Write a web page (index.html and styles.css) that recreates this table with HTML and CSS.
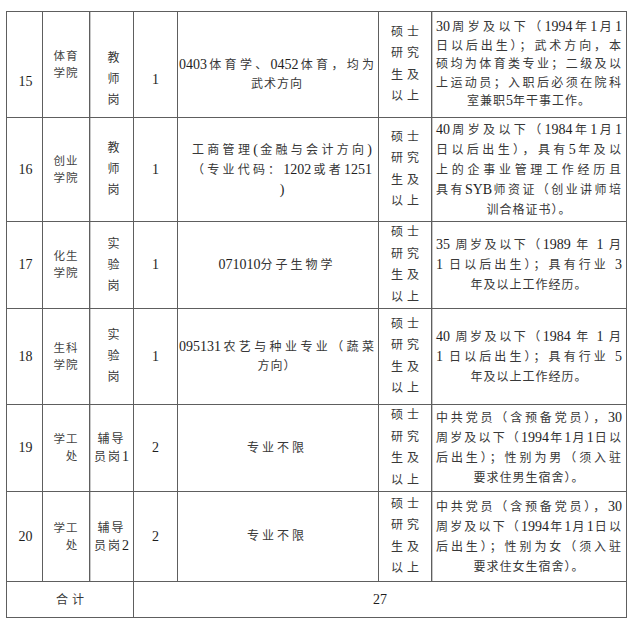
FILE: index.html
```html
<!DOCTYPE html>
<html lang="zh-CN">
<head>
<meta charset="utf-8">
<title>招聘岗位表</title>
<link rel="stylesheet" href="styles.css">
</head>
<body>
<div class="page">
<table class="jobs">
  <colgroup>
    <col class="w1"><col class="w2"><col class="w3"><col class="w4"><col class="w5"><col class="w6"><col class="w7">
  </colgroup>
  <tbody>
    <tr class="r15">
      <td class="n"><div class="low">15</div></td>
      <td class="dept"><div>体育</div><div>学院</div></td>
      <td class="post"><div class="low2"><div>教</div><div>师</div><div>岗</div></div></td>
      <td class="cnt"><div class="low2">1</div></td>
      <td class="major"><div class="low3"><div class="j"><span class="d">0403</span>体育学、<span class="d">0452</span>体育，均为</div><div class="c">武术方向</div></div></td>
      <td class="deg"><div>硕士</div><div>研究</div><div>生及</div><div>以上</div></td>
      <td class="req tight"><div class="j"><span class="d">30</span>周岁及以下（<span class="d">1994</span>年<span class="d">1</span>月<span class="d">1</span></div><div class="j">日以后出生）；武术方向，本</div><div class="j">硕均为体育类专业；二级及以</div><div class="j">上运动员；入职后必须在院科</div><div class="c">室兼职<span class="d">5</span>年干事工作。</div></td>
    </tr>
    <tr class="r16">
      <td class="n">16</td>
      <td class="dept"><div>创业</div><div>学院</div></td>
      <td class="post"><div>教</div><div>师</div><div>岗</div></td>
      <td class="cnt">1</td>
      <td class="major inset"><div class="j">工商管理<span class="d">(</span>金融与会计方向<span class="d">)</span></div><div class="j">（专业代码：<span class="d">1202</span>或者<span class="d">1251</span></div><div class="c"><span class="d">)</span></div></td>
      <td class="deg"><div>硕士</div><div>研究</div><div>生及</div><div>以上</div></td>
      <td class="req"><div class="j"><span class="d">40</span>周岁及以下（<span class="d">1984</span>年<span class="d">1</span>月<span class="d">1</span></div><div class="j">日以后出生），具有<span class="d">5</span>年及以</div><div class="j">上的企事业管理工作经历且</div><div class="j">具有<span class="d">SYB</span>师资证（创业讲师培</div><div class="c">训合格证书）。</div></td>
    </tr>
    <tr class="r17">
      <td class="n">17</td>
      <td class="dept"><div>化生</div><div>学院</div></td>
      <td class="post"><div>实</div><div>验</div><div>岗</div></td>
      <td class="cnt">1</td>
      <td class="major"><div class="c wide"><span class="d">071010</span>分子生物学</div></td>
      <td class="deg"><div>硕士</div><div>研究</div><div>生及</div><div>以上</div></td>
      <td class="req"><div class="j"><span class="d">35</span> 周岁及以下（<span class="d">1989</span> 年 <span class="d">1</span> 月</div><div class="j"><span class="d">1</span> 日以后出生）；具有行业 <span class="d">3</span></div><div class="c">年及以上工作经历。</div></td>
    </tr>
    <tr class="r18">
      <td class="n">18</td>
      <td class="dept"><div>生科</div><div>学院</div></td>
      <td class="post"><div>实</div><div>验</div><div>岗</div></td>
      <td class="cnt">1</td>
      <td class="major"><div class="j"><span class="d">095131</span>农艺与种业专业（蔬菜</div><div class="c">方向）</div></td>
      <td class="deg"><div>硕士</div><div>研究</div><div>生及</div><div>以上</div></td>
      <td class="req"><div class="j"><span class="d">40</span> 周岁及以下（<span class="d">1984</span> 年 <span class="d">1</span> 月</div><div class="j"><span class="d">1</span> 日以后出生）；具有行业 <span class="d">5</span></div><div class="c">年及以上工作经历。</div></td>
    </tr>
    <tr class="r19">
      <td class="n">19</td>
      <td class="dept"><div>学工</div><div class="ind">处</div></td>
      <td class="post two"><div>辅导</div><div>员岗<span class="d">1</span></div></td>
      <td class="cnt">2</td>
      <td class="major"><div class="c wide">专业不限</div></td>
      <td class="deg"><div>硕士</div><div>研究</div><div>生及</div><div>以上</div></td>
      <td class="req"><div class="j">中共党员（含预备党员），<span class="d">30</span></div><div class="j">周岁及以下（<span class="d">1994</span>年<span class="d">1</span>月<span class="d">1</span>日以</div><div class="j">后出生）；性别为男（须入驻</div><div class="c">要求住男生宿舍）。</div></td>
    </tr>
    <tr class="r20">
      <td class="n">20</td>
      <td class="dept"><div>学工</div><div class="ind">处</div></td>
      <td class="post two"><div>辅导</div><div>员岗<span class="d">2</span></div></td>
      <td class="cnt">2</td>
      <td class="major"><div class="c wide">专业不限</div></td>
      <td class="deg"><div>硕士</div><div>研究</div><div>生及</div><div>以上</div></td>
      <td class="req"><div class="j">中共党员（含预备党员），<span class="d">30</span></div><div class="j">周岁及以下（<span class="d">1994</span>年<span class="d">1</span>月<span class="d">1</span>日以</div><div class="j">后出生）；性别为女（须入驻</div><div class="c">要求住女生宿舍）。</div></td>
    </tr>
    <tr class="total">
      <td colspan="3" class="sum">合计</td>
      <td colspan="4" class="sumv">27</td>
    </tr>
  </tbody>
</table>
</div>
</body>
</html>
```

FILE: styles.css
```css
html, body {
  margin: 0;
  padding: 0;
  background: #ffffff;
}

.page {
  padding: 11px 0 0 6px;
}

.jobs {
  border-collapse: collapse;
  table-layout: fixed;
  width: 620px;
  font-family: "Liberation Serif", "Noto Sans CJK SC", serif;
  font-size: 12px;
  color: #383838;
}

.w1 { width: 36px; }
.w2 { width: 47px; }
.w3 { width: 44px; }
.w4 { width: 44px; }
.w5 { width: 201px; }
.w6 { width: 53px; }
.w7 { width: 195px; }

.jobs td {
  border: 1px solid #5e5e5e;
  padding: 0;
  text-align: center;
  vertical-align: middle;
  line-height: 20px;
}

.r15 td { height: 105px; }
.r16 td { height: 103px; }
.r17 td { height: 84px; }
.r18 td { height: 95px; }
.r19 td { height: 84px; }
.r20 td { height: 89px; }
.total td { height: 35px; }

.d {
  font-size: 14px;
  color: #1e1e1e;
  letter-spacing: 0;
}

.n {
  font-size: 14px;
  color: #1e1e1e;
  padding-left: 2px !important;
}

.dept {
  font-size: 11.5px;
  color: #444;
  line-height: 17px !important;
  letter-spacing: 1px;
}

.dept .ind {
  padding-left: 12px;
}

.post {
  line-height: 21px !important;
  padding-left: 4px !important;
  box-shadow: inset 1px 0 0 #c8c8c8;
}

.post.two {
  line-height: 18px !important;
  padding-left: 0 !important;
  letter-spacing: 2px;
}

.cnt {
  font-size: 14px;
  color: #1e1e1e;
}

.major {
  padding: 0 3px 0 1px !important;
  line-height: 19px !important;
  letter-spacing: 1px;
}

.major.inset {
  padding: 0 6px 0 14px !important;
}

.deg {
  line-height: 21.5px !important;
  letter-spacing: 4px;
  text-indent: 4px;
}

.req {
  padding: 0 4px 0 4px !important;
  box-shadow: inset 1px 0 0 #c8c8c8;
  letter-spacing: 1px;
}

.req.tight {
  line-height: 18.5px !important;
}

.j {
  text-align: justify;
  text-align-last: justify;
  white-space: nowrap;
}

.c {
  text-align: center;
}

.wide {
  letter-spacing: 3px;
}

.low { padding-top: 34px; }
.low2 { padding-top: 30px; }
.low3 { padding-top: 20px; }

.sum {
  letter-spacing: 4px;
  text-indent: 4px;
}

.sumv {
  font-size: 14px;
  color: #1e1e1e;
}
```
